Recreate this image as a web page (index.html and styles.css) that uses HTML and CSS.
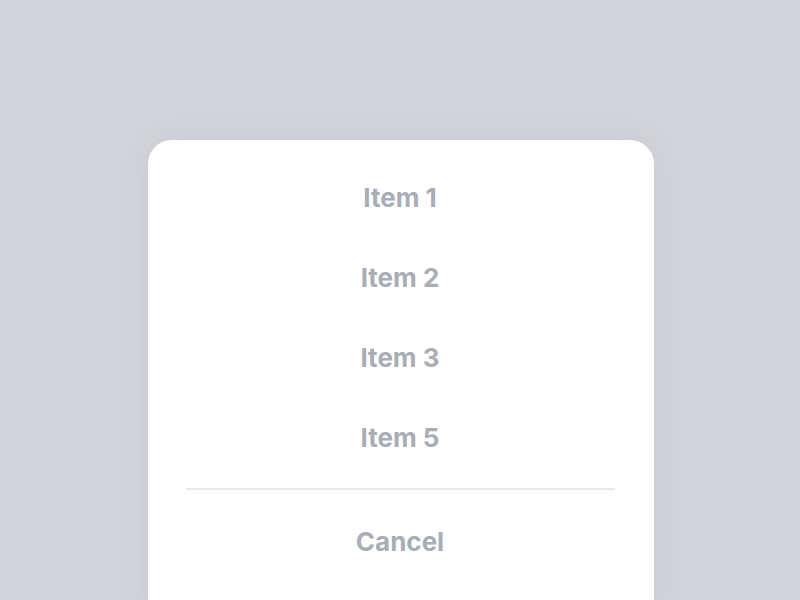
FILE: index.html
```html
<!DOCTYPE html>
<html>
<head>
<meta charset="utf-8">
<link rel="stylesheet" href="styles.css">
</head>
<body>
<div class="screen">
  <div class="sheet">
    <ul class="options">
      <li class="option">Item 1</li>
      <li class="option">Item 2</li>
      <li class="option">Item 3</li>
      <li class="option">Item 5</li>
    </ul>
    <hr class="divider">
    <div class="option cancel">Cancel</div>
  </div>
</div>
</body>
</html>
```
FILE: styles.css
```css
html, body {
  margin: 0;
  padding: 0;
  height: 100%;
  overflow: hidden;
}
body {
  background: #d3d4d9;
  font-family: Inter, "Liberation Sans", sans-serif;
}
.screen {
  display: flex;
  justify-content: center;
  padding-top: 140px;
  padding-left: 2px;
  height: 600px;
  box-sizing: border-box;
}
.sheet {
  width: 506px;
  height: 480px;
  background: #ffffff;
  border-radius: 24px 24px 0 0;
  box-shadow: 0 0 36px rgba(60, 64, 80, 0.06);
  padding-top: 17px;
  box-sizing: border-box;
}
.options {
  list-style: none;
  margin: 0;
  padding: 0;
}
.option {
  height: 80px;
  display: flex;
  align-items: center;
  justify-content: center;
  font-size: 26px;
  font-weight: 700;
  color: #a9adb6;
  padding-right: 2px;
}
.divider {
  border: none;
  height: 2px;
  background: #e7e8eb;
  margin: 11px 39px 11px 38px;
}
```
